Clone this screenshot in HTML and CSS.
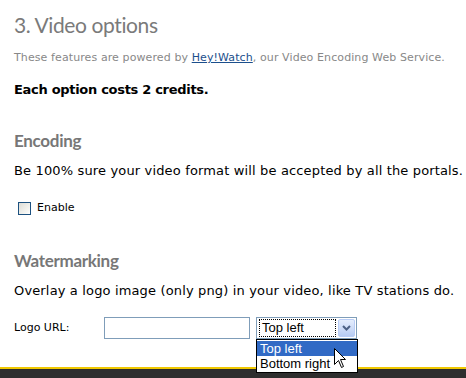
FILE: index.html
```html
<!DOCTYPE html>
<html>
<head>
<meta charset="utf-8">
<link rel="stylesheet" href="styles.css">
</head>
<body>
<div class="page">
  <h1 class="title">3. Video options</h1>
  <p class="intro">These features are powered by <a class="link" href="#">Hey!Watch</a>, our Video Encoding Web Service.</p>
  <p class="cost">Each option costs 2 credits.</p>
  <h2 class="section">Encoding</h2>
  <p class="desc">Be 100% sure your video format will be accepted by all the portals.</p>
  <label class="check"><span class="box"></span><span class="check-label">Enable</span></label>
  <h2 class="section section-water">Watermarking</h2>
  <p class="desc">Overlay a logo image (only png) in your video, like TV stations do.</p>
  <div class="row">
    <span class="lbl">Logo URL:</span>
    <span class="input"></span>
    <div class="select">
      <div class="select-field">
        <span class="select-value">Top left</span>
        <span class="select-btn">
          <svg width="9" height="6" viewBox="0 0 9 6"><path d="M1 1 L4.5 4.5 L8 1" fill="none" stroke="#4d6185" stroke-width="2"/></svg>
        </span>
      </div>
      <ul class="options">
        <li class="option option-active">Top left</li>
        <li class="option">Bottom right</li>
      </ul>
      <svg class="cursor" width="13" height="21" viewBox="0 0 13 21"><path d="M0.5 0.5 L0.5 16.5 L4.5 12.5 L7.5 19.5 L9.5 18.5 L6.5 11.5 L11.5 11.5 Z" fill="#fff" stroke="#000" stroke-width="1"/></svg>
    </div>
  </div>
</div>
<footer class="footer"></footer>
</body>
</html>
```

FILE: styles.css
```css
html, body {
  margin: 0;
  padding: 0;
  background: #fff;
}
body {
  height: 378px;
  display: flex;
  flex-direction: column;
  overflow: hidden;
  font-family: "DejaVu Sans", Verdana, sans-serif;
  color: #000;
}
.page {
  flex: 1;
  padding: 11px 0 0 14px;
}
.title {
  margin: 0;
  font-family: Lato, "Open Sans", sans-serif;
  font-weight: 400;
  font-size: 21px;
  letter-spacing: -0.4px;
  line-height: 28px;
  color: #7a7a7a;
}
.intro {
  margin: 12px 0 0;
  font-size: 11px;
  letter-spacing: 0.1px;
  line-height: 14px;
  color: #888;
}
.link {
  color: #1c4f8c;
  text-decoration: underline;
}
.cost {
  margin: 17px 0 0;
  font-size: 13px;
  font-weight: bold;
  letter-spacing: -0.3px;
  line-height: 16px;
}
.section {
  margin: 33px 0 0;
  font-family: Lato, "Open Sans", sans-serif;
  font-weight: 700;
  font-size: 17px;
  letter-spacing: -0.3px;
  line-height: 20px;
  color: #777;
}
.desc {
  margin: 12px 0 0;
  font-size: 13px;
  letter-spacing: 0.15px;
  line-height: 16px;
}
.check {
  display: flex;
  align-items: center;
  gap: 6px;
  margin: 22px 0 0 4px;
  font-size: 11px;
  line-height: 14px;
}
.box {
  width: 11px;
  height: 11px;
  border: 1px solid #1c5180;
  background: linear-gradient(135deg, #dcdcd6 0%, #f4f4f0 70%, #fff 100%);
}
.section-water {
  margin-top: 36px;
}
.row {
  display: flex;
  align-items: center;
  margin-top: 18px;
}
.lbl {
  width: 90px;
  font-size: 11px;
  line-height: 14px;
}
.input {
  width: 144px;
  height: 20px;
  border: 1px solid #7f9db9;
  background: #fff;
}
.select {
  position: relative;
  margin-left: 6px;
}
.select-field {
  display: flex;
  align-items: center;
  width: 99px;
  height: 20px;
  border: 1px solid #7f9db9;
  padding: 0;
}
.select-value {
  flex: 1;
  margin: 1px 2px 1px 2px;
  height: 16px;
  border: 1px dotted #000;
  font-family: "Liberation Sans", Arial, sans-serif;
  font-size: 13px;
  line-height: 16px;
  padding-left: 2px;
}
.select-btn {
  width: 17px;
  height: 18px;
  margin-right: 1px;
  box-sizing: border-box;
  border: 1px solid #b9cdf6;
  border-radius: 2px;
  background: linear-gradient(180deg, #e4edfd 0%, #cbdaf7 60%, #b6cbf3 100%);
  display: flex;
  align-items: center;
  justify-content: center;
}
.options {
  position: absolute;
  left: 0;
  top: 22px;
  width: 100px;
  margin: 0;
  padding: 1px 0;
  list-style: none;
  background: #fff;
  border: 1px solid #000;
  font-family: "Liberation Sans", Arial, sans-serif;
  font-size: 13px;
  line-height: 15px;
}
.option {
  padding-left: 3px;
  height: 15px;
}
.option-active {
  background: #316ac5;
  color: #fff;
}
.cursor {
  position: absolute;
  left: 78px;
  top: 31px;
}
.footer {
  height: 9px;
  border-top: 2px solid #f0c800;
  background: #2e2e2e;
}
```
